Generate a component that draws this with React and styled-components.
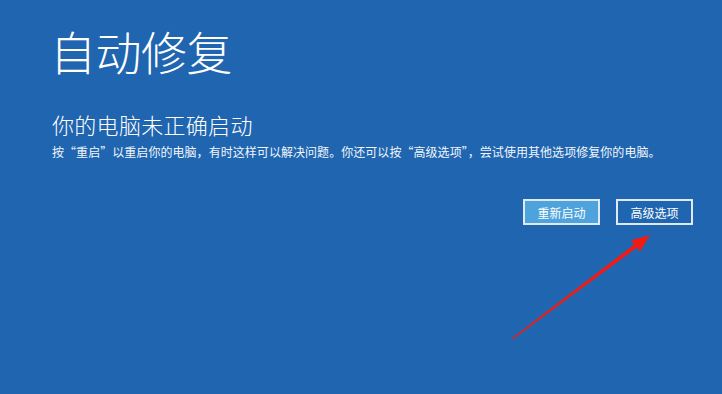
import styled, { createGlobalStyle } from "styled-components";

const GlobalStyle = createGlobalStyle`
  html, body {
    margin: 0;
    padding: 0;
    background: #1f65b0;
  }
  body {
    font-family: "Noto Sans CJK SC", "Noto Sans", sans-serif;
  }
`;

const Screen = styled.div`
  position: relative;
  width: 722px;
  height: 394px;
  overflow: hidden;
  background: #1f65b0;
  color: #ffffff;
  padding: 27px 29px 0 50px;
  box-sizing: border-box;
`;

const Title = styled.h1`
  margin: 0;
  font-size: 46px;
  line-height: 46px;
  font-weight: 200;
  letter-spacing: -0.5px;
`;

const Body = styled.div`
  margin-top: 40px;
  padding-left: 2px;
`;

const Heading = styled.h2`
  margin: 0;
  font-size: 22px;
  line-height: 22px;
  font-weight: 300;
  letter-spacing: 0.3px;
`;

const Message = styled.p`
  margin: 10px 0 0;
  font-size: 12px;
  line-height: 14px;
  font-weight: 400;
  letter-spacing: 0.05px;
  color: #f2f6fb;
`;

const Actions = styled.div`
  display: flex;
  justify-content: flex-end;
  gap: 16px;
  margin-top: 40px;
`;

const Button = styled.button`
  width: 77px;
  height: 26px;
  box-sizing: border-box;
  border: 2px solid #dfeaf6;
  background: ${(p) => (p.$primary ? "#4ea3dc" : "transparent")};
  color: #ffffff;
  font-family: "Noto Sans CJK SC", sans-serif;
  font-size: 12px;
  padding: 0;
  cursor: pointer;
`;

const Annotation = styled.svg`
  position: absolute;
  left: 0;
  top: 0;
  pointer-events: none;
`;

export default function App() {
  return (
    <>
      <GlobalStyle />
      <Screen>
        <Title>自动修复</Title>
        <Body>
          <Heading>你的电脑未正确启动</Heading>
          <Message>
            按“重启”以重启你的电脑，有时这样可以解决问题。你还可以按“高级选项”，尝试使用其他选项修复你的电脑。
          </Message>
        </Body>
        <Actions>
          <Button $primary>重新启动</Button>
          <Button>高级选项</Button>
        </Actions>
        <Annotation width="722" height="394" viewBox="0 0 722 394">
          <polygon
            points="511.6,338.6 634.2,244.4 631.2,240.2 650,235 640,251.6 637,247.6 512.4,339.6"
            fill="#f21b14"
          />
        </Annotation>
      </Screen>
    </>
  );
}
